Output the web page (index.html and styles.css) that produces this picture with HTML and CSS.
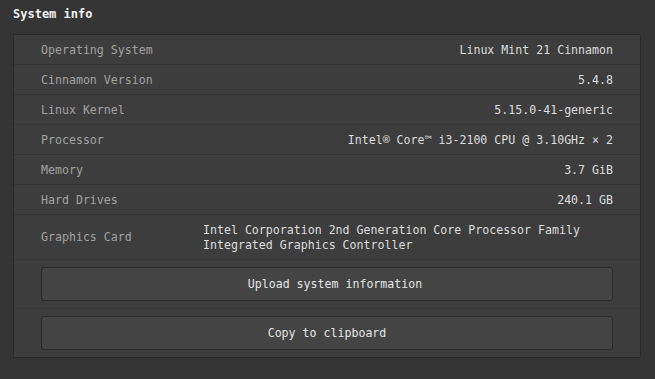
FILE: index.html
```html
<!DOCTYPE html>
<html lang="en">
<head>
  <meta charset="UTF-8">
  <title>System info</title>
  <link rel="stylesheet" href="styles.css">
</head>
<body>
  <h2 class="page-title">System info</h2>
  <div class="info-panel">
    <div class="info-row">
      <span class="info-label">Operating System</span>
      <span class="info-value">Linux Mint 21 Cinnamon</span>
    </div>
    <div class="info-row">
      <span class="info-label">Cinnamon Version</span>
      <span class="info-value">5.4.8</span>
    </div>
    <div class="info-row">
      <span class="info-label">Linux Kernel</span>
      <span class="info-value">5.15.0-41-generic</span>
    </div>
    <div class="info-row">
      <span class="info-label">Processor</span>
      <span class="info-value">Intel® Core™ i3-2100 CPU @ 3.10GHz × 2</span>
    </div>
    <div class="info-row">
      <span class="info-label">Memory</span>
      <span class="info-value">3.7 GiB</span>
    </div>
    <div class="info-row">
      <span class="info-label">Hard Drives</span>
      <span class="info-value">240.1 GB</span>
    </div>
    <div class="info-row info-row-wide">
      <span class="info-label">Graphics Card</span>
      <span class="info-value info-value-left">Intel Corporation 2nd Generation Core Processor Family<br>Integrated Graphics Controller</span>
    </div>
    <div class="button-row">
      <button class="panel-btn btn-upload">Upload system information</button>
    </div>
    <div class="button-row">
      <button class="panel-btn">Copy to clipboard</button>
    </div>
  </div>
</body>
</html>
```

FILE: styles.css
```css
body {
  margin: 0;
  padding: 0 14px 0 13px;
  background-color: #353535;
  font-family: "DejaVu Sans Mono", "Liberation Mono", monospace;
  font-size: 11.6px;
  color: #dcdcdc;
}

.page-title {
  margin: 0;
  padding: 7px 0 0 0;
  height: 27px;
  font-size: 12px;
  font-weight: bold;
  color: #f0f0f0;
}

.info-panel {
  background-color: #3d3d3d;
  border: 1px solid #2a2a2a;
}

.info-row {
  display: flex;
  align-items: center;
  justify-content: space-between;
  height: 29px;
  padding: 0 27px;
  border-bottom: 1px solid #343434;
}

.info-label {
  color: #a2a2a2;
}

.info-value {
  color: #dedede;
}

.info-row-wide {
  height: 44px;
  justify-content: flex-start;
}

.info-row-wide .info-label {
  width: 162px;
}

.info-value-left {
  line-height: 15px;
  padding-top: 2px;
}

.button-row {
  padding: 7px 27px;
  border-bottom: 1px solid #393939;
}

.button-row:last-child {
  border-bottom: 0;
}

.panel-btn {
  display: block;
  width: 100%;
  height: 34px;
  background-color: #444444;
  border: 1px solid #2a2a2a;
  border-radius: 3px;
  color: #e6e6e6;
  font-family: inherit;
  font-size: 11.6px;
  cursor: pointer;
}

.btn-upload {
  padding-left: 22px;
}
```
